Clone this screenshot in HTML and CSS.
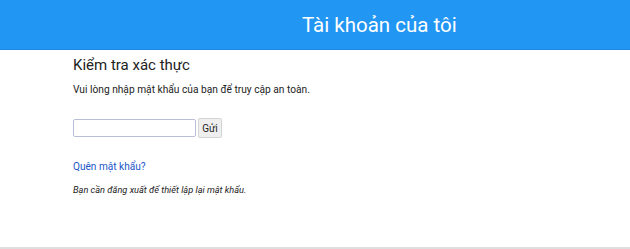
FILE: index.html
```html
<!DOCTYPE html>
<html lang="vi">
<head>
  <meta charset="UTF-8">
  <meta name="viewport" content="width=device-width, initial-scale=1.0">
  <link rel="stylesheet" href="styles.css">
  <title>Tài khoản của tôi</title>
</head>
<body>
  <header class="topBar">
    <h1 class="topTitle">Tài khoản của tôi</h1>
  </header>

  <main class="content">
    <h2 class="pageHeading">Kiểm tra xác thực</h2>
    <p class="intro">Vui lòng nhập mật khẩu của bạn để truy cập an toàn.</p>

    <form class="authForm" onsubmit="return false;">
      <input type="password" class="passInput" />
      <button type="submit" class="sendBtn">Gửi</button>
    </form>

    <a href="#" class="forgotLink">Quên mật khẩu?</a>
    <p class="note">Bạn cần đăng xuất để thiết lập lại mật khẩu.</p>
  </main>

  <div class="bottomLine"></div>
</body>
</html>
```

FILE: styles.css
```css
body {
  font-family: Roboto, "Noto Sans", sans-serif;
  margin: 0;
  background-color: #ffffff;
  color: #222222;
  height: 249px;
  display: flex;
  flex-direction: column;
  overflow: hidden;
}

.topBar {
  background-color: #2196f3;
  height: 49px;
  border-bottom: 1px solid #1e88e5;
  display: flex;
  align-items: center;
  padding-left: 302px;
}

.topTitle {
  margin: 0;
  color: #ffffff;
  font-size: 20.5px;
  font-weight: 400;
  line-height: 24px;
}

.content {
  flex: 1;
  padding: 6px 0 0 73px;
}

.pageHeading {
  margin: 0;
  font-size: 15px;
  line-height: 18px;
  font-weight: 400;
  color: #222222;
}

.intro {
  margin: 10px 0 0;
  font-size: 10.2px;
  line-height: 12px;
  color: #222222;
}

.authForm {
  display: flex;
  align-items: center;
  height: 20px;
  margin-top: 22px;
}

.passInput {
  box-sizing: border-box;
  width: 123px;
  height: 18px;
  padding: 1px 2px;
  border: 1px solid #b9bfd9;
  border-radius: 2px;
  font-size: 10px;
}

.sendBtn {
  box-sizing: border-box;
  margin-left: 2px;
  width: 24px;
  height: 20px;
  padding: 0;
  font-family: Roboto, sans-serif;
  font-size: 10px;
  color: #222222;
  background-color: #efefef;
  border: 1px solid #d4d4d4;
  border-radius: 2px;
}

.forgotLink {
  display: block;
  margin-top: 23px;
  font-size: 10.1px;
  line-height: 12px;
  color: #2256c9;
  text-decoration: none;
}

.note {
  margin: 11px 0 0;
  font-size: 9.2px;
  line-height: 12px;
  font-style: italic;
  color: #222222;
}

.bottomLine {
  height: 2px;
  background-color: #dedede;
}
```
